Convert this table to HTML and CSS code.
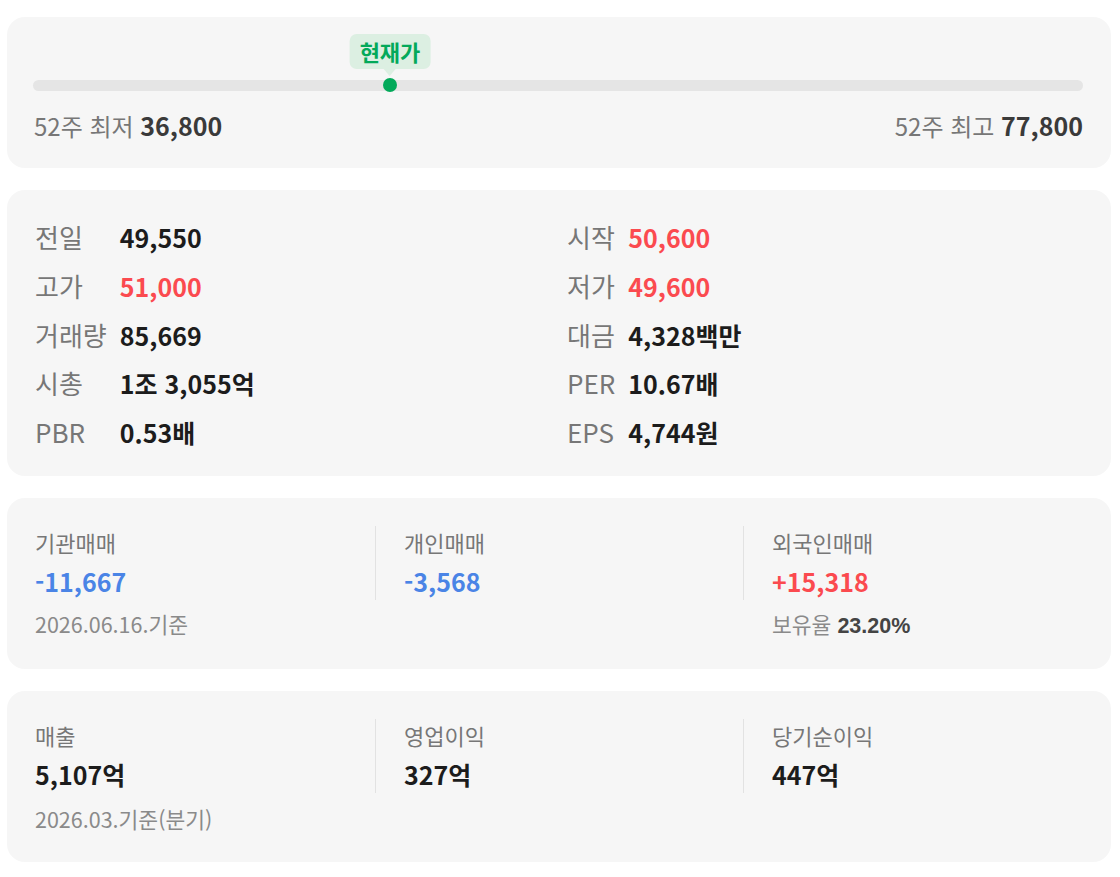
FILE: index.html
```html
<!DOCTYPE html>
<html lang="ko">
<head>
<meta charset="utf-8">
<title>시세 정보</title>
<link rel="stylesheet" href="styles.css">
</head>
<body>
<main class="page">
  <section class="card range">
    <div class="track">
      <div class="marker" style="left: 34%">
        <span class="badge">현재가</span>
        <span class="dot"></span>
      </div>
    </div>
    <div class="range-labels">
      <span class="range-item">52주 최저 <b>36,800</b></span>
      <span class="range-item">52주 최고 <b>77,800</b></span>
    </div>
  </section>

  <section class="card quotes">
    <dl class="quote-col">
      <dt>전일</dt><dd>49,550</dd>
      <dt>고가</dt><dd class="up">51,000</dd>
      <dt>거래량</dt><dd>85,669</dd>
      <dt>시총</dt><dd>1조 3,055억</dd>
      <dt>PBR</dt><dd>0.53배</dd>
    </dl>
    <dl class="quote-col">
      <dt>시작</dt><dd class="up">50,600</dd>
      <dt>저가</dt><dd class="up">49,600</dd>
      <dt>대금</dt><dd>4,328백만</dd>
      <dt>PER</dt><dd>10.67배</dd>
      <dt>EPS</dt><dd>4,744원</dd>
    </dl>
  </section>

  <section class="card stats">
    <div class="stat-col">
      <div class="stat">
        <div class="stat-title">기관매매</div>
        <div class="stat-value down">-11,667</div>
      </div>
      <div class="stat-note">2026.06.16.기준</div>
    </div>
    <div class="stat-col">
      <div class="stat divided">
        <div class="stat-title">개인매매</div>
        <div class="stat-value down">-3,568</div>
      </div>
    </div>
    <div class="stat-col">
      <div class="stat divided">
        <div class="stat-title">외국인매매</div>
        <div class="stat-value up">+15,318</div>
      </div>
      <div class="stat-note">보유율 <b class="ratio">23.20%</b></div>
    </div>
  </section>

  <section class="card stats stats-earnings">
    <div class="stat-col">
      <div class="stat">
        <div class="stat-title">매출</div>
        <div class="stat-value">5,107억</div>
      </div>
      <div class="stat-note">2026.03.기준(분기)</div>
    </div>
    <div class="stat-col">
      <div class="stat divided">
        <div class="stat-title">영업이익</div>
        <div class="stat-value">327억</div>
      </div>
    </div>
    <div class="stat-col">
      <div class="stat divided">
        <div class="stat-title">당기순이익</div>
        <div class="stat-value">447억</div>
      </div>
    </div>
  </section>
</main>
</body>
</html>
```

FILE: styles.css
```css
* {
  box-sizing: border-box;
}

html, body {
  margin: 0;
  padding: 0;
  background: #ffffff;
}

body {
  font-family: "Noto Sans CJK KR", "Noto Sans", sans-serif;
  color: #1c1c1c;
}

.page {
  display: flex;
  flex-direction: column;
  gap: 22px;
  padding: 17px 9px 16px 7px;
}

.card {
  background: #f6f6f6;
  border-radius: 18px;
}

/* 52-week range */
.range {
  padding: 63px 28px 27px 26px;
}

.track {
  position: relative;
  height: 11px;
  border-radius: 6px;
  background: #e5e5e5;
}

.marker {
  position: absolute;
  top: 50%;
  width: 0;
  height: 0;
}

.dot {
  position: absolute;
  left: -7px;
  top: -7.5px;
  width: 14px;
  height: 14px;
  border-radius: 50%;
  background: #03a95a;
}

.badge {
  position: absolute;
  bottom: 17px;
  left: 0;
  transform: translateX(-50%);
  white-space: nowrap;
  height: 35px;
  padding: 0 10px;
  line-height: 35px;
  border-radius: 7px;
  background: #dcefe2;
  color: #03a95a;
  font-size: 22px;
  font-weight: 700;
}

.badge::after {
  content: "";
  position: absolute;
  left: 50%;
  top: 100%;
  margin-left: -6px;
  border-left: 6px solid transparent;
  border-right: 6px solid transparent;
  border-top: 7px solid #dcefe2;
}

.range-labels {
  display: flex;
  justify-content: space-between;
  margin-top: 19px;
  padding-left: 1px;
  font-size: 24px;
  line-height: 30px;
  color: #777777;
}

.range-labels b {
  font-size: 25px;
  color: #3a3a3a;
  font-weight: 700;
}

/* quote grid */
.quotes {
  display: grid;
  grid-template-columns: 532px 1fr;
  padding: 23px 28px 19px 28px;
}

.quote-col {
  display: grid;
  grid-template-columns: auto 1fr;
  column-gap: 13px;
  margin: 0;
  line-height: 48.75px;
}

.quote-col dt {
  font-size: 26px;
  color: #777777;
}

.quote-col dd {
  margin: 0;
  font-size: 25px;
  font-weight: 700;
  color: #1c1c1c;
}

.quote-col dd.up {
  color: #fb4a4f;
}

/* trading / earnings */
.stats {
  display: grid;
  grid-template-columns: repeat(3, 1fr);
  padding: 28px 0 28px 0;
}

.stat {
  padding-left: 28px;
}

.stat.divided {
  border-left: 1px solid #e2e2e2;
}

.stat-title {
  font-size: 22px;
  line-height: 32px;
  color: #777777;
}

.stat-value {
  margin-top: 4px;
  font-size: 25px;
  line-height: 38px;
  font-weight: 700;
  color: #1c1c1c;
}

.stat-value.down {
  color: #4a84e6;
}

.stat-value.up {
  color: #fb4a4f;
}

.stat-note {
  margin-top: 9px;
  padding-left: 28px;
  font-size: 21.5px;
  line-height: 30px;
  color: #8a8a8a;
}

.stats-earnings .stat-note {
  margin-top: 11px;
}

.stat-col + .stat-col .stat-note {
  padding-left: 29px;
}

.stat-note .ratio {
  font-family: "Liberation Sans", Arial, sans-serif;
  font-weight: 700;
  color: #444444;
}
```
